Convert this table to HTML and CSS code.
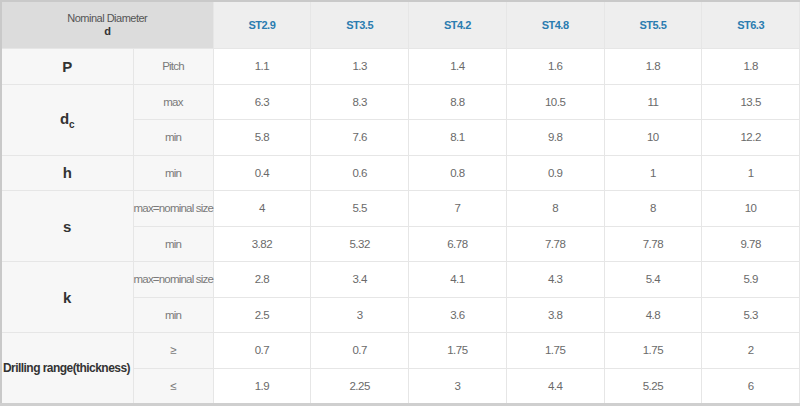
FILE: index.html
```html
<!DOCTYPE html>
<html>
<head>
<meta charset="utf-8">
<link rel="stylesheet" href="styles.css">
</head>
<body>
<table class="spec">
  <colgroup>
    <col class="c-label"><col class="c-sub">
    <col class="c-data"><col class="c-data"><col class="c-data"><col class="c-data"><col class="c-data"><col class="c-data">
  </colgroup>
  <thead>
    <tr class="head">
      <th colspan="2" class="corner"><span class="nd">Nominal Diameter</span><span class="d">d</span></th>
      <th>ST2.9</th><th>ST3.5</th><th>ST4.2</th><th>ST4.8</th><th>ST5.5</th><th>ST6.3</th>
    </tr>
  </thead>
  <tbody>
    <tr><td class="lab">P</td><td class="sub">Pitch</td><td>1.1</td><td>1.3</td><td>1.4</td><td>1.6</td><td>1.8</td><td>1.8</td></tr>
    <tr><td class="lab" rowspan="2">d<sub>c</sub></td><td class="sub">max</td><td>6.3</td><td>8.3</td><td>8.8</td><td>10.5</td><td>11</td><td>13.5</td></tr>
    <tr><td class="sub">min</td><td>5.8</td><td>7.6</td><td>8.1</td><td>9.8</td><td>10</td><td>12.2</td></tr>
    <tr><td class="lab">h</td><td class="sub">min</td><td>0.4</td><td>0.6</td><td>0.8</td><td>0.9</td><td>1</td><td>1</td></tr>
    <tr><td class="lab" rowspan="2">s</td><td class="sub">max=nominal size</td><td>4</td><td>5.5</td><td>7</td><td>8</td><td>8</td><td>10</td></tr>
    <tr><td class="sub">min</td><td>3.82</td><td>5.32</td><td>6.78</td><td>7.78</td><td>7.78</td><td>9.78</td></tr>
    <tr><td class="lab" rowspan="2">k</td><td class="sub">max=nominal size</td><td>2.8</td><td>3.4</td><td>4.1</td><td>4.3</td><td>5.4</td><td>5.9</td></tr>
    <tr><td class="sub">min</td><td>2.5</td><td>3</td><td>3.6</td><td>3.8</td><td>4.8</td><td>5.3</td></tr>
    <tr><td class="lab drill" rowspan="2">Drilling range(thickness)</td><td class="sub">≥</td><td>0.7</td><td>0.7</td><td>1.75</td><td>1.75</td><td>1.75</td><td>2</td></tr>
    <tr><td class="sub">≤</td><td>1.9</td><td>2.25</td><td>3</td><td>4.4</td><td>5.25</td><td>6</td></tr>
  </tbody>
</table>
</body>
</html>
```
FILE: styles.css
```css
html, body {
  margin: 0;
  padding: 0;
  background: #ffffff;
}
.spec {
  width: 800px;
  table-layout: fixed;
  border-collapse: collapse;
  font-family: "Liberation Sans", Arial, sans-serif;
  font-size: 11.5px;
  letter-spacing: -0.5px;
  color: #6a6a6a;
  border-top: 2px solid #c9c9c9;
  border-left: 2px solid #c9c9c9;
  border-bottom: 3px solid #cfcfcf;
}
.c-label { width: 132px; }
.c-sub { width: 80px; }
.spec th, .spec td {
  border: 1px solid #e6e6e6;
  text-align: center;
  vertical-align: middle;
  padding: 0;
  height: 34.5px;
}
.spec tr > .lab { border-left: 2px solid #c9c9c9; }
.head th {
  height: 46px;
  background: #eeeeee;
  color: #2a7cb0;
  font-weight: bold;
  font-size: 11px;
  border-top: 2px solid #c9c9c9;
}
.head th.corner {
  background: #dcdcdc;
  color: #555;
  font-weight: normal;
  vertical-align: top;
  padding-top: 10px;
  height: 36px;
  border-left: 2px solid #c9c9c9;
}
.nd { display: block; line-height: 13px; }
.d { display: block; font-weight: bold; color: #333; line-height: 13px; }
.lab, .sub { background: #f7f7f7; }
.lab {
  font-weight: bold;
  font-size: 15px;
  letter-spacing: 0;
  color: #333;
}
.lab sub { font-size: 10px; }
.lab.drill {
  font-size: 12px;
  letter-spacing: -0.55px;
  text-align: left;
  white-space: nowrap;
  padding-left: 1px;
}
.sub { color: #7a7a7a; white-space: nowrap; letter-spacing: -0.8px; }
```
